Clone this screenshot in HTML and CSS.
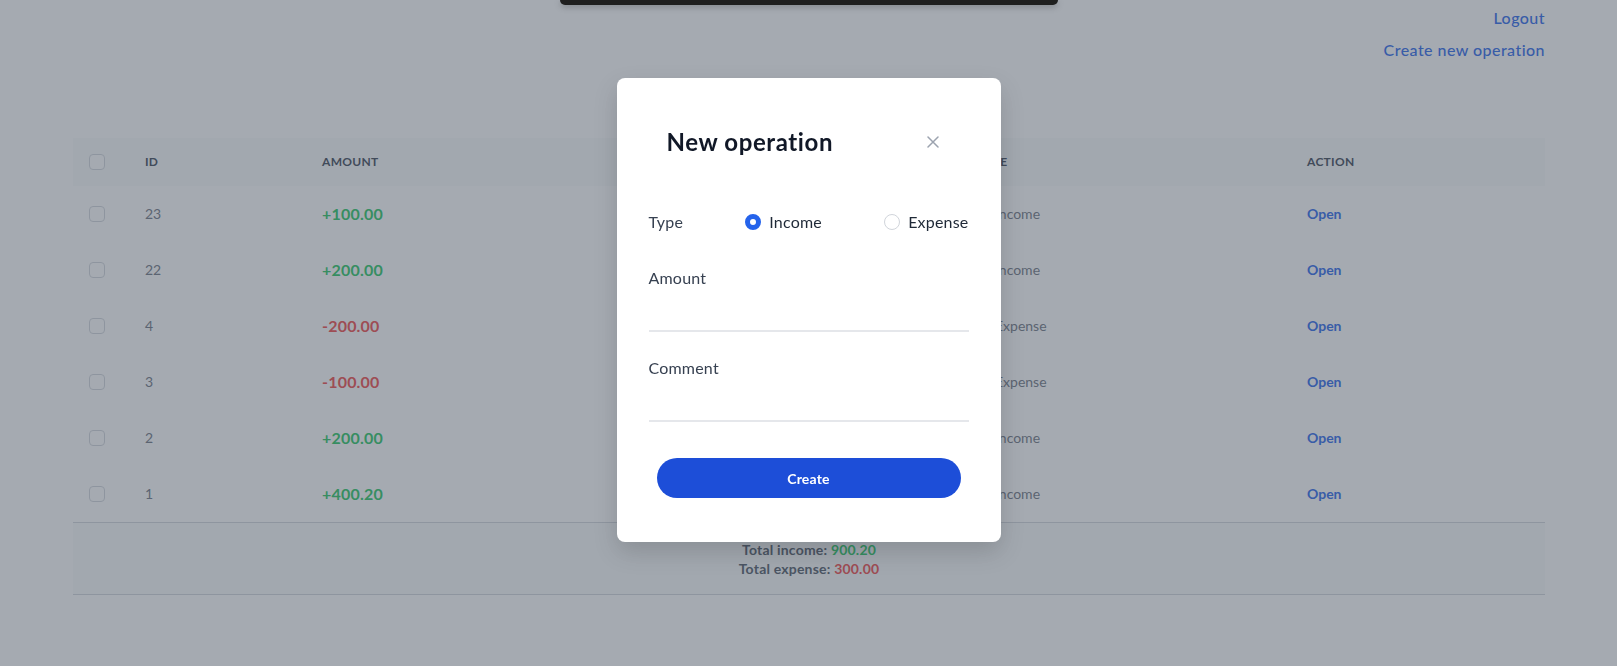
FILE: index.html
```html
<!DOCTYPE html>
<html lang="en">
<head>
<meta charset="utf-8">
<title>Operations</title>
<link rel="stylesheet" href="styles.css">
</head>
<body>
<div class="page">
  <nav class="nav">
    <a class="nav-link" href="#">Logout</a>
    <a class="nav-link" href="#">Create new operation</a>
  </nav>

  <table class="ops">
    <colgroup>
      <col class="c-check"><col class="c-id"><col class="c-amount"><col class="c-comment"><col class="c-type"><col class="c-action">
    </colgroup>
    <thead>
      <tr>
        <th class="cell-check"><span class="box"></span></th>
        <th>ID</th>
        <th>Amount</th>
        <th>Comment</th>
        <th>Type</th>
        <th>Action</th>
      </tr>
    </thead>
    <tbody>
      <tr><td class="cell-check"><span class="box"></span></td><td class="id">23</td><td class="amt plus">+100.00</td><td></td><td class="type">Income</td><td><a class="open" href="#">Open</a></td></tr>
      <tr><td class="cell-check"><span class="box"></span></td><td class="id">22</td><td class="amt plus">+200.00</td><td></td><td class="type">Income</td><td><a class="open" href="#">Open</a></td></tr>
      <tr><td class="cell-check"><span class="box"></span></td><td class="id">4</td><td class="amt minus">-200.00</td><td></td><td class="type">Expense</td><td><a class="open" href="#">Open</a></td></tr>
      <tr><td class="cell-check"><span class="box"></span></td><td class="id">3</td><td class="amt minus">-100.00</td><td></td><td class="type">Expense</td><td><a class="open" href="#">Open</a></td></tr>
      <tr><td class="cell-check"><span class="box"></span></td><td class="id">2</td><td class="amt plus">+200.00</td><td></td><td class="type">Income</td><td><a class="open" href="#">Open</a></td></tr>
      <tr><td class="cell-check"><span class="box"></span></td><td class="id">1</td><td class="amt plus">+400.20</td><td></td><td class="type">Income</td><td><a class="open" href="#">Open</a></td></tr>
    </tbody>
    <tfoot>
      <tr>
        <td colspan="6" class="totals">
          <div>Total income: <span class="plus">900.20</span></div>
          <div>Total expense: <span class="minus">300.00</span></div>
        </td>
      </tr>
    </tfoot>
  </table>
</div>

<div class="overlay">
  <div class="modal">
    <div class="modal-head">
      <h2 class="modal-title">New operation</h2>
      <button class="close" aria-label="Close">
        <svg width="12" height="12" viewBox="0 0 12 12"><path d="M1 1 L11 11 M11 1 L1 11" stroke="#9ca3af" stroke-width="1.5" fill="none" stroke-linecap="round"/></svg>
      </button>
    </div>
    <div class="type-row">
      <span class="label">Type</span>
      <label class="radio"><input type="radio" name="type" checked><span>Income</span></label>
      <label class="radio"><input type="radio" name="type"><span>Expense</span></label>
    </div>
    <div class="field">
      <label class="label">Amount</label>
      <input class="input" type="text">
    </div>
    <div class="field field-2">
      <label class="label">Comment</label>
      <input class="input" type="text">
    </div>
    <button class="create">Create</button>
  </div>
</div>

<div class="toast"></div>
</body>
</html>
```

FILE: styles.css
```css
* { box-sizing: border-box; }
html, body { margin: 0; padding: 0; }
body {
  font-family: Lato, "Noto Sans", "Liberation Sans", sans-serif;
  background: #ffffff;
  color: #111827;
  width: 1617px;
  height: 666px;
  overflow: hidden;
}
.page {
  padding: 6px 72px 0 73px;
}
.nav {
  display: flex;
  flex-direction: column;
  align-items: flex-end;
  gap: 8px;
}
.nav-link {
  font-size: 16px;
  line-height: 24px;
  font-weight: 500;
  letter-spacing: 0.45px;
  color: #2563eb;
  text-decoration: none;
}

.ops {
  margin-top: 76px;
  width: 1472px;
  border-collapse: collapse;
  table-layout: fixed;
}
.c-check { width: 48px; }
.c-id { width: 177px; }
.c-amount { width: 322px; }
.c-comment { width: 333px; }
.c-type { width: 330px; }
.c-action { width: 262px; }

.ops thead tr { background: #f9fafb; }
.ops th {
  height: 48px;
  padding: 0 24px;
  text-align: left;
  font-size: 12px;
  line-height: 16px;
  font-weight: 700;
  letter-spacing: 0.3px;
  text-transform: uppercase;
  color: #374151;
}
.ops td {
  height: 56px;
  padding: 0 24px;
  font-size: 14px;
  line-height: 24px;
  color: #6b7280;
}
.ops .cell-check { padding: 0 16px; }
.box {
  display: block;
  width: 16px;
  height: 16px;
  border: 1px solid #d1d5db;
  border-radius: 4px;
  background: #fff;
}
.ops td.amt { font-size: 16px; font-weight: 700; letter-spacing: 0.2px; }
.ops .plus, .plus { color: #22c55e; }
.ops .minus, .minus { color: #ef4444; }
.ops td.type { padding-left: 42px; }
.open {
  color: #2563eb;
  font-weight: 700;
  text-decoration: none;
}
.ops tfoot td.totals {
  height: auto;
  padding: 17px 0 16px;
  background: #f9fafb;
  border-top: 1px solid #d1d5db;
  border-bottom: 1px solid #d1d5db;
  text-align: center;
  font-size: 14px;
  line-height: 19px;
  font-weight: 700;
  letter-spacing: 0.2px;
  color: #4b5563;
}

.overlay {
  position: fixed;
  inset: 0;
  background: rgba(75, 85, 99, 0.5);
  display: flex;
  justify-content: center;
  align-items: flex-start;
  padding-top: 78px;
}
.modal {
  width: 384px;
  background: #fff;
  border-radius: 8px;
  box-shadow: 0 10px 25px rgba(0,0,0,0.15);
  padding: 48px 32px 44px;
}
.modal-head {
  display: flex;
  align-items: center;
  justify-content: space-between;
  height: 32px;
  padding: 0 30px 0 18px;
}
.modal-title {
  margin: 0;
  font-size: 24px;
  line-height: 32px;
  font-weight: 700;
  letter-spacing: 0.6px;
  color: #111827;
}
.close {
  border: 0;
  background: none;
  padding: 0;
  width: 12px;
  height: 12px;
  display: block;
}
.close svg { display: block; }

.type-row {
  margin-top: 52px;
  display: flex;
  justify-content: space-between;
  align-items: center;
  height: 24px;
}
.label {
  display: block;
  font-size: 16px;
  line-height: 24px;
  letter-spacing: 0.2px;
  color: #374151;
}
.radio {
  display: flex;
  align-items: center;
  gap: 8px;
  font-size: 16px;
  line-height: 24px;
  letter-spacing: 0.2px;
  color: #1f2937;
}
.radio input {
  appearance: none;
  -webkit-appearance: none;
  margin: 0;
  width: 16px;
  height: 16px;
  border: 1px solid #d1d5db;
  border-radius: 50%;
  background: #fff;
}
.radio input:checked {
  border: 5px solid #2563eb;
  background: #fff;
}
.field { margin-top: 32px; }
.field-2 { margin-top: 24px; }
.input {
  display: block;
  width: 100%;
  height: 42px;
  border: 0;
  border-bottom: 2px solid #e5e7eb;
  padding: 8px 0;
  font: inherit;
  outline: none;
}
.create {
  display: block;
  margin: 36px 8px 0;
  width: calc(100% - 16px);
  height: 40px;
  border: 0;
  border-radius: 9999px;
  background: #1d4ed8;
  color: #fff;
  font-family: inherit;
  font-size: 14px;
  font-weight: 700;
  letter-spacing: 0.2px;
}

.toast {
  position: fixed;
  top: 0;
  left: 50%;
  transform: translateX(-50%);
  width: 498px;
  height: 5px;
  background: #1f1f1f;
  border-radius: 0 0 6px 6px;
  box-shadow: 0 2px 6px rgba(0,0,0,0.25);
}
```
